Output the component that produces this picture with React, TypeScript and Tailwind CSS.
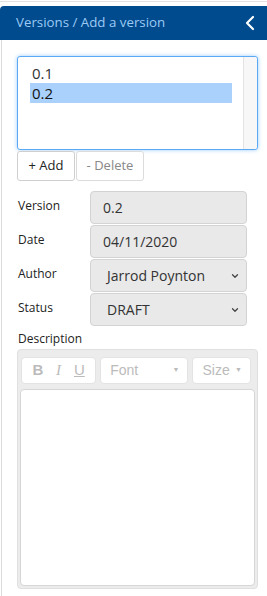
import { ChevronDown, ChevronLeft } from "lucide-react";

const font = { fontFamily: '"Open Sans", "Noto Sans", sans-serif' };

const Field = ({ label, children }: { label: string; children: React.ReactNode }) => (
    <div className="flex items-start h-[34px]">
        <div className="w-[73px] pl-[1px] pt-[6px] text-[12px] text-[#222]">{label}</div>
        {children}
    </div>
);

export default function App() {
    return (
        <div className="w-[267px] h-[596px] bg-white overflow-hidden" style={font}>
            <div className="h-[5px] border-t border-[#e2e2e2] mt-[1px]" />
            <div className="h-[34px] bg-[#004b8d] rounded-tl-[4px] flex items-center justify-between pl-[16px] pr-[5px]">
                <span className="text-[13.3px] text-[#9ccaf5]">Versions / Add a version</span>
                <ChevronLeft className="w-[24px] h-[24px] text-white" strokeWidth={2.2} />
            </div>
            <div className="border-l border-[#dcdcdc] ml-px h-[556px] pl-[15px] pr-[9px] pt-[16px]">
                {/* version list */}
                <div className="h-[94px] flex rounded-[3px] border border-[#5aa9f5] shadow-[0_0_4px_#9fcdfa] bg-white">
                    <div className="flex-1 pl-[12px] pt-[6px] text-[15px] leading-[20px]">
                        <div className="text-[#333] pl-[2px]">0.1</div>
                        <div className="bg-[#a9d1fc] text-[#111] w-[202px] pl-[2px]">0.2</div>
                    </div>
                    <div className="w-[14px] bg-[#f7f7f7] border-l border-[#e3e3e3] rounded-r-[3px]" />
                </div>
                <div className="flex gap-[1px] mt-[1px] mb-[10px]">
                    <button className="w-[58px] h-[30px] border border-[#cfcfcf] rounded-[3px] text-[13px] text-[#222] bg-white">
                        + Add
                    </button>
                    <button className="w-[68px] h-[30px] border border-[#dcdcdc] rounded-[3px] text-[13px] text-[#888] bg-white">
                        - Delete
                    </button>
                </div>
                <Field label="Version">
                    <div className="w-[157px] h-[33px] rounded-[4px] border border-[#d3d3d3] bg-[#e9e9e9] pl-[12px] flex items-center text-[14px] text-[#333]">
                        0.2
                    </div>
                </Field>
                <Field label="Date">
                    <div className="w-[157px] h-[33px] rounded-[4px] border border-[#d3d3d3] bg-[#e9e9e9] pl-[12px] flex items-center text-[14px] text-[#333]">
                        04/11/2020
                    </div>
                </Field>
                <Field label="Author">
                    <div className="w-[157px] h-[33px] rounded-[4px] border border-[#d3d3d3] bg-[#e9e9e9] pl-[16px] pr-[6px] flex items-center justify-between text-[14px] text-[#333]">
                        <span>Jarrod Poynton</span>
                        <ChevronDown className="w-[10px] h-[10px] text-[#444]" strokeWidth={3} />
                    </div>
                </Field>
                <Field label="Status">
                    <div className="w-[157px] h-[33px] rounded-[4px] border border-[#d3d3d3] bg-[#e9e9e9] pl-[16px] pr-[6px] flex items-center justify-between text-[14px] text-[#333]">
                        <span>DRAFT</span>
                        <ChevronDown className="w-[10px] h-[10px] text-[#444]" strokeWidth={3} />
                    </div>
                </Field>
                <div className="text-[12px] text-[#222] pl-[1px] mt-[2px] leading-[20px]">Description</div>
                {/* editor */}
                <div className="h-[240px] bg-[#ececec] rounded-[4px] border border-[#e0e0e0] p-[2px] pt-[7px] flex flex-col">
                    <div
                        className="flex gap-[4px] h-[27px] pl-[1px] pr-[4px] text-[14px] text-[#bbb]"
                        style={{ fontFamily: '"Liberation Sans", Arial, sans-serif' }}
                    >
                        <div className="w-[76px] bg-white rounded-[4px] border border-[#e3e3e3] flex items-center justify-around px-[4px]">
                            <span className="font-bold text-[15px]">B</span>
                            <span className="italic text-[15px]" style={{ fontFamily: '"Liberation Serif", serif' }}>I</span>
                            <span className="underline text-[15px]">U</span>
                        </div>
                        <div className="w-[89px] bg-white rounded-[4px] border border-[#e3e3e3] flex items-center justify-between pl-[9px] pr-[8px]">
                            <span>Font</span>
                            <span className="text-[7px]">▼</span>
                        </div>
                        <div className="w-[59px] bg-white rounded-[4px] border border-[#e3e3e3] flex items-center justify-between pl-[9px] pr-[8px]">
                            <span>Size</span>
                            <span className="text-[7px]">▼</span>
                        </div>
                    </div>
                    <div className="flex-1 mt-[5px] bg-white rounded-[4px] border border-[#d6d6d6]" />
                </div>
            </div>
        </div>
    );
}
